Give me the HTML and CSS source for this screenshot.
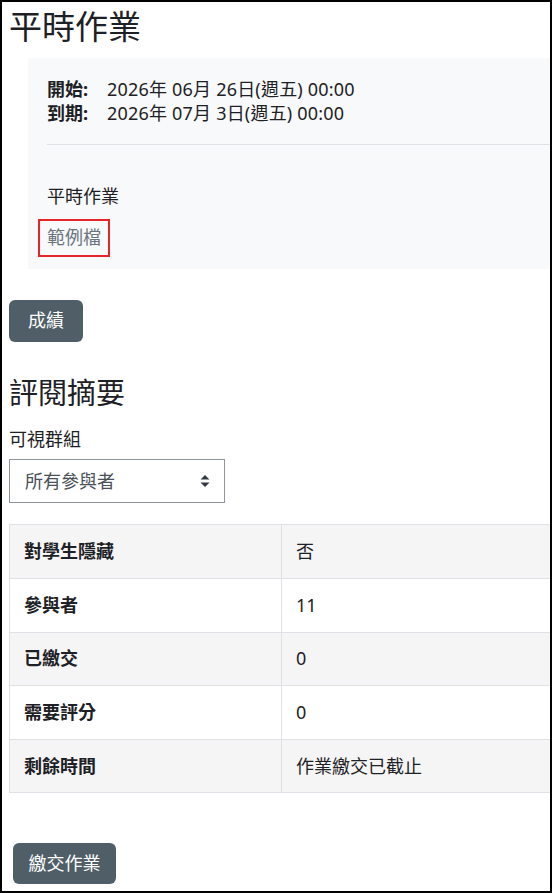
FILE: index.html
```html
<!DOCTYPE html>
<html lang="zh-Hant">
<head>
<meta charset="utf-8">
<title>平時作業</title>
<link rel="stylesheet" href="styles.css">
</head>
<body>
<div class="frame">
  <div class="page">
    <h2 class="title">平時作業</h2>
    <div class="intro">
      <div class="dates">
        <div><strong class="dlabel">開始:</strong><span class="dval">2026年 06月 26日(週五) 00:00</span></div>
        <div><strong class="dlabel">到期:</strong><span class="dval">2026年 07月 3日(週五) 00:00</span></div>
      </div>
      <hr class="divider">
      <p class="desc">平時作業</p>
      <div class="files"><a class="file-link" href="#">範例檔</a></div>
    </div>
    <div class="actions"><a class="btn" href="#">成績</a></div>
    <h3 class="subtitle">評閱摘要</h3>
    <div class="group-label">可視群組</div>
    <div class="select">
      <span>所有參與者</span>
      <svg class="caret" width="10" height="14" viewBox="0 0 10 14"><path d="M5 1 L9.5 5.5 L0.5 5.5 Z M5 13 L9.5 8.5 L0.5 8.5 Z" fill="#343a40"/></svg>
    </div>
    <table class="summary">
      <colgroup><col class="col-label"><col class="col-value"></colgroup>
      <tbody>
        <tr><th>對學生隱藏</th><td>否</td></tr>
        <tr><th>參與者</th><td>11</td></tr>
        <tr><th>已繳交</th><td>0</td></tr>
        <tr><th>需要評分</th><td>0</td></tr>
        <tr><th>剩餘時間</th><td>作業繳交已截止</td></tr>
      </tbody>
    </table>
    <div class="submit-row"><a class="btn btn-submit" href="#">繳交作業</a></div>
  </div>
</div>
</body>
</html>
```
FILE: styles.css
```css
html, body {
  margin: 0;
  padding: 0;
  background: #fff;
}
.frame {
  box-sizing: border-box;
  width: 552px;
  height: 893px;
  border: 2px solid #000;
  overflow: hidden;
  font-family: "Noto Sans", "Noto Sans CJK TC", sans-serif;
  font-size: 18px;
  line-height: 27px;
  color: #1d2125;
}
.page {
  width: 544px;
  padding-left: 7px;
}
.title {
  margin: 5px 0 11px 0;
  font-size: 33px;
  line-height: 39.6px;
  font-weight: 400;
  color: #1d2125;
}
.intro {
  margin-left: 19px;
  background: #f8f9fa;
  padding: 19px 0 12px 19px;
}
.dates {
  line-height: 24px;
}
.dlabel {
  display: inline-block;
  width: 60px;
  font-weight: 700;
}
.dval {
  letter-spacing: 0.2px;
}
.divider {
  border: 0;
  border-top: 1px solid #dee2e6;
  margin: 19px 0 0 0;
  height: 0;
}
.desc {
  margin: 38.5px 0 0 0;
}
.files {
  margin-top: 8.5px;
}
.file-link {
  display: inline-block;
  margin-left: -9px;
  padding: 3px 7px 4px 7px;
  border: 2px solid #e5252a;
  color: #6a747d;
  text-decoration: none;
}
.actions {
  margin-top: 31px;
}
.btn {
  display: inline-block;
  background: #505f67;
  color: #fff;
  text-decoration: none;
  padding: 7.5px 19px;
  border-radius: 6px;
}
.subtitle {
  margin: 34px 0 0 0;
  font-size: 29px;
  line-height: 34.8px;
  font-weight: 400;
}
.group-label {
  margin-top: 16px;
}
.select {
  box-sizing: border-box;
  margin-top: 6px;
  width: 216px;
  height: 44px;
  border: 1px solid #8f959e;
  padding: 0 14px 0 15px;
  display: flex;
  align-items: center;
  justify-content: space-between;
  color: #495057;
}
.caret {
  display: block;
}
.summary {
  margin-top: 21px;
  width: 544px;
  border-collapse: collapse;
  table-layout: fixed;
}
.col-label {
  width: 272px;
}
.col-value {
  width: 272px;
}
.summary th,
.summary td {
  border: 1px solid #dee2e6;
  padding: 12.8px 14px;
  text-align: left;
  vertical-align: middle;
}
.summary th {
  font-weight: 700;
}
.summary tr:nth-child(odd) {
  background: #f5f5f5;
}
.submit-row {
  margin-top: 50px;
  padding-left: 4px;
}
.btn-submit {
  padding: 7px 15.5px;
}
```
